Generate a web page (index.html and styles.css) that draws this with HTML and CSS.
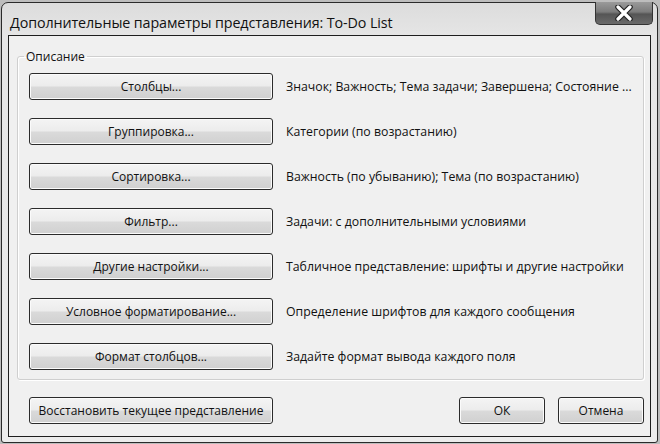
FILE: index.html
```html
<!DOCTYPE html>
<html lang="ru">
<head>
<meta charset="utf-8">
<link rel="stylesheet" href="styles.css">
</head>
<body>
<div class="window">
  <div class="titlebar">
    <div class="title">Дополнительные параметры представления: To-Do List</div>
    <div class="close">
      <svg width="22" height="16" viewBox="0 0 22 16"><path d="M5 2 L17 14 M17 2 L5 14" stroke="#222" stroke-width="5.5" stroke-linecap="round"/><path d="M5 2 L17 14 M17 2 L5 14" stroke="#fff" stroke-width="3.2" stroke-linecap="round"/></svg>
    </div>
  </div>
  <div class="client">
    <fieldset class="group">
      <legend>Описание</legend>
      <div class="row"><button class="btn wide">Столбцы...</button><span class="desc">Значок; Важность; Тема задачи; Завершена; Состояние ...</span></div>
      <div class="row"><button class="btn wide">Группировка...</button><span class="desc">Категории (по возрастанию)</span></div>
      <div class="row"><button class="btn wide">Сортировка...</button><span class="desc">Важность (по убыванию); Тема (по возрастанию)</span></div>
      <div class="row"><button class="btn wide">Фильтр...</button><span class="desc">Задачи: с дополнительными условиями</span></div>
      <div class="row"><button class="btn wide">Другие настройки...</button><span class="desc">Табличное представление: шрифты и другие настройки</span></div>
      <div class="row"><button class="btn wide">Условное форматирование...</button><span class="desc">Определение шрифтов для каждого сообщения</span></div>
      <div class="row"><button class="btn wide">Формат столбцов...</button><span class="desc">Задайте формат вывода каждого поля</span></div>
    </fieldset>
    <div class="footer">
      <button class="btn wide">Восстановить текущее представление</button>
      <div class="actions">
        <button class="btn small">ОК</button>
        <button class="btn small">Отмена</button>
      </div>
    </div>
  </div>
</div>
</body>
</html>
```

FILE: styles.css
```css
html, body {
  margin: 0;
  padding: 0;
}
body {
  width: 660px;
  height: 444px;
  background: #bdbdbd;
  font-family: "Open Sans", "Noto Sans", sans-serif;
  overflow: hidden;
}
.window {
  box-sizing: border-box;
  margin: 2px 2px 0 1px;
  height: 441px;
  border: 1px solid #2a2a2a;
  border-radius: 7px 7px 3px 3px;
  background: linear-gradient(180deg, #dcdcdc 0%, #e6e6e6 8%, #ececec 100%);
  padding: 0 6px 5px 6px;
  display: flex;
  flex-direction: column;
}
.titlebar {
  height: 32px;
  display: flex;
  justify-content: space-between;
  align-items: flex-start;
}
.title {
  padding-top: 10px;
  padding-left: 2px;
  font-size: 14.3px;
  color: #111;
  letter-spacing: -0.1px;
}
.close {
  box-sizing: border-box;
  width: 58px;
  height: 23px;
  margin-top: -1px;
  margin-right: -2px;
  border: 1px solid #333;
  border-top: none;
  border-radius: 0 0 5px 5px;
  background: linear-gradient(180deg, #9a9a9a 0%, #7c7c7c 45%, #555 55%, #6a6a6a 100%);
  display: flex;
  align-items: center;
  justify-content: center;
}
.client {
  flex: 1;
  border: 1px solid #1e1e1e;
  background: #f0f0f0;
  padding: 12px 6px 0 8px;
  display: flex;
  flex-direction: column;
}
.group {
  margin: 0;
  border: 1px solid #cfcfcf;
  border-radius: 3px;
  box-shadow: inset 1px 1px 0 #fff, 1px 1px 0 #fff;
  padding: 8px 10px 9px 11px;
  display: flex;
  flex-direction: column;
  gap: 18px;
}
.group legend {
  font-size: 12px;
  color: #111;
  padding: 0 2px;
  margin-left: -5px;
}
.row {
  display: flex;
  align-items: center;
  gap: 13px;
}
.btn {
  box-sizing: border-box;
  height: 27px;
  border: 1px solid #2b2b2b;
  border-radius: 3px;
  background: linear-gradient(180deg, #f4f4f4 0%, #ececec 48%, #dadada 52%, #d0d0d0 100%);
  box-shadow: inset 0 0 0 1px #fbfbfb;
  font-family: "Open Sans", "Noto Sans", sans-serif;
  font-size: 12px;
  color: #111;
  padding: 0;
}
.wide {
  width: 244px;
  flex: none;
}
.small {
  width: 86px;
}
.desc {
  font-size: 12.3px;
  color: #111;
  white-space: nowrap;
}
.footer {
  margin-top: 17px;
  display: flex;
  justify-content: space-between;
  padding-left: 12px;
  padding-right: 0;
}
.actions {
  display: flex;
  gap: 13px;
}
```
